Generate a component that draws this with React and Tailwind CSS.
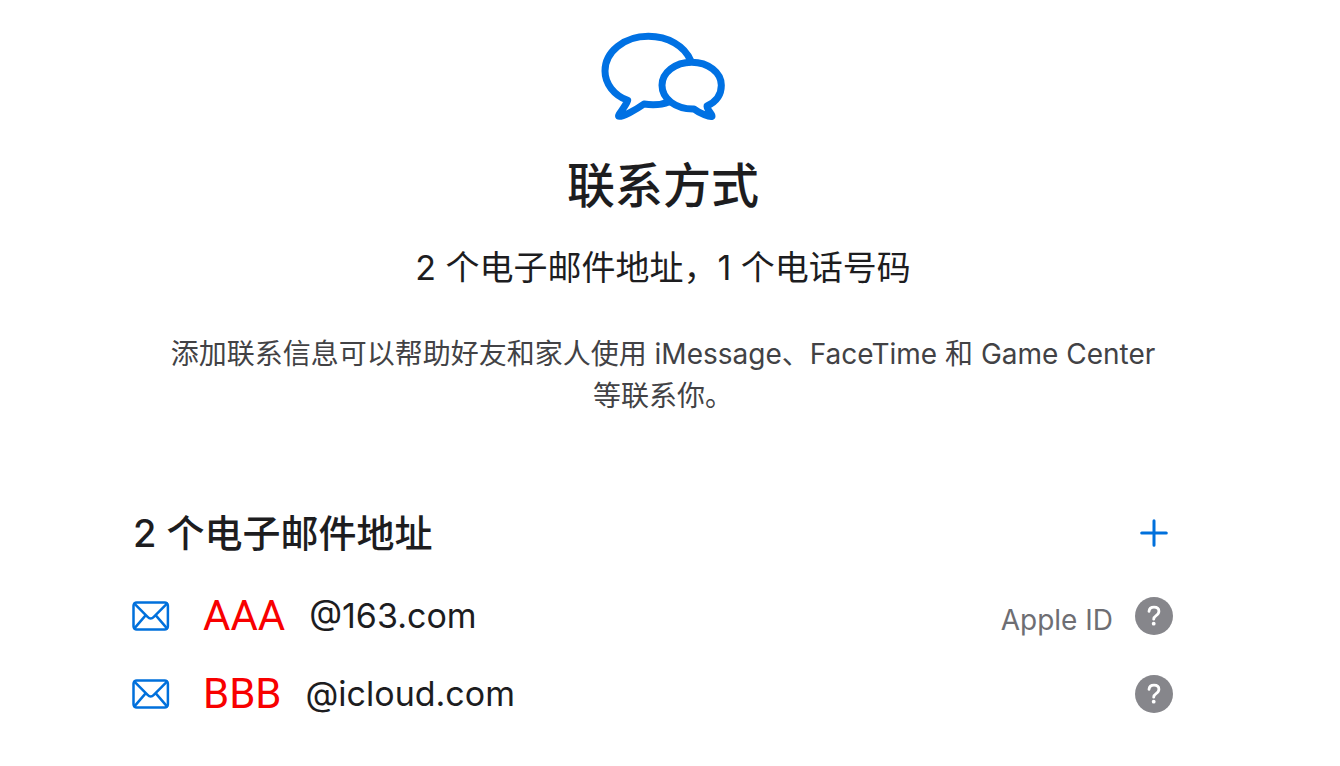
import React from 'react';

const emails = [
  { id: 1, name: 'AAA', domain: '@163.com', tag: 'Apple ID' },
  { id: 2, name: 'BBB', domain: '@icloud.com', tag: '' },
];

const ChatIcon = () => (
  <svg
    viewBox="30 36 378 270"
    className="w-[126px] h-[90px]"
    fill="none"
    stroke="#0071e3"
    strokeWidth="21"
    strokeLinejoin="round"
    aria-hidden="true"
  >
    <path d="M302 122C284 78 234 49 175 49C102 49 45 96 45 153C45 191 72 226 113 241C107 260 82 285 86 289C92 294 140 268 162 252C188 256 214 255 238 245" />
    <path d="M305 127C255 127 216 158 216 196C216 236 256 268 312 267C330 281 360 292 366 289C368 284 352 272 351 258C380 245 394 222 394 196C394 158 355 127 305 127Z" />
  </svg>
);

const MailIcon = () => (
  <svg
    viewBox="0 0 38 30"
    className="w-[38px] h-[30px] shrink-0"
    fill="none"
    stroke="#0070dc"
    strokeWidth="2.5"
    strokeLinecap="round"
    strokeLinejoin="round"
    aria-hidden="true"
  >
    <rect x="1.5" y="1.5" width="34.4" height="27" rx="3.2" />
    <path d="M2.4 2.6L15.6 15.9Q18.7 19 21.8 15.9L35 2.6M2.4 27.4L13.6 14.4M35 27.4L23.8 14.4" />
  </svg>
);

const PlusIcon = () => (
  <svg viewBox="0 0 28 28" className="w-7 h-7" fill="none" stroke="#0070dc" strokeWidth="3" strokeLinecap="round" aria-hidden="true">
    <path d="M14 1.7V26.3M1.7 14H26.3" />
  </svg>
);

const HelpIcon = () => (
  <svg viewBox="0 0 38 38" className="w-[38px] h-[38px]" aria-hidden="true">
    <circle cx="19" cy="19" r="19" fill="#86868b" />
    <path d="M14 14.4C14.3 11.6 16.2 10.2 19 10.2C21.9 10.2 23.9 11.8 23.9 14.3C23.9 16.4 22.8 17.5 21.1 18.6C19.4 19.7 18.7 20.5 18.7 22.2" fill="none" stroke="#fff" strokeWidth="2.8" strokeLinecap="round" />
    <circle cx="18.7" cy="26.7" r="1.9" fill="#fff" />
  </svg>
);

const EmailRow = ({ email }) => (
  <li className="h-[78px] flex items-center">
    <MailIcon />
    <span className="ml-[33px] mr-6 text-[42px] leading-none text-[#f80000] font-['Roboto',sans-serif]">{email.name}</span>
    <span className="text-[34px] leading-none">{email.domain}</span>
    <span className="ml-auto mr-[22px] pt-2 text-[28px] leading-none text-[#6e6e73]">{email.tag}</span>
    <button type="button" aria-label="帮助" className="rounded-full">
      <HelpIcon />
    </button>
  </li>
);

const App = () => {
  return (
    <main className="min-h-screen bg-white pt-8 pl-[132px] pr-[146px] text-[#1d1d1f] font-['Inter','Noto_Sans_CJK_SC',sans-serif]">
      <header className="flex flex-col items-center text-center">
        <ChatIcon />
        <h1 className="mt-8 text-[48px] leading-[64px] font-medium">联系方式</h1>
        <p className="mt-[25px] text-[34px] leading-[50px]">2 个电子邮件地址，1 个电话号码</p>
        <p className="mt-10 max-w-[1000px] text-[28px] leading-[42px] text-[#424245]">
          添加联系信息可以帮助好友和家人使用 iMessage、FaceTime 和 Game Center 等联系你。
        </p>
      </header>

      <section className="mt-[88px] pr-[21px]">
        <div className="flex items-center justify-between h-[56px]">
          <h2 className="pl-px text-[38px] leading-[56px] font-medium">{emails.length} 个电子邮件地址</h2>
          <button type="button" aria-label="添加" className="mr-[5px]">
            <PlusIcon />
          </button>
        </div>
        <ul className="mt-4">
          {emails.map((email) => (
            <EmailRow key={email.id} email={email} />
          ))}
        </ul>
      </section>
    </main>
  );
};

export default App;
